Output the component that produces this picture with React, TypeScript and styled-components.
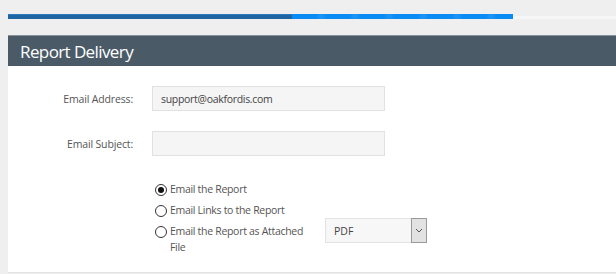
import React from "react";
import styled, { createGlobalStyle } from "styled-components";

const Global = createGlobalStyle`
  html, body { margin: 0; padding: 0; background: #efefef; }
  body { font-family: "Open Sans", "Liberation Sans", sans-serif; }
`;

const Page = styled.div`
  width: 616px;
  height: 274px;
  overflow: hidden;
  padding-left: 8px;
  box-sizing: border-box;
`;

const ProgressTrack = styled.div`
  margin-top: 14px;
  height: 5px;
  width: 608px;
  display: flex;
  align-items: stretch;
`;

const ProgressDone = styled.div`
  width: 284px;
  background: #1f64a3;
  border-top: 1px solid #2a78bd;
`;

const ProgressActive = styled.div`
  width: 221px;
  background: repeating-linear-gradient(90deg, #0a8cf4 0 24px, #1b93f4 27px, #1b93f4 31px, #0a8cf4 34px);
`;

const ProgressRest = styled.div`
  flex: 1;
  margin-top: 2px;
  background: #f6f6f6;
`;

const Header = styled.div`
  margin-top: 16px;
  height: 30px;
  background: #4a5b67;
  border-top: 1px solid #8a9299;
  display: flex;
  align-items: center;
  padding-left: 12px;
  color: #fff;
  font-size: 17px;
  letter-spacing: -0.6px;
`;

const Body = styled.div`
  background: #fff;
  height: 207px;
  border-bottom: 1px solid #e2e2e2;
  padding-top: 20px;
  box-sizing: border-box;
`;

const FieldRow = styled.div`
  display: flex;
  align-items: center;
  margin-bottom: 20px;
`;

const Label = styled.div`
  width: 125px;
  text-align: right;
  font-size: 10.5px;
  letter-spacing: -0.15px;
  color: #555;
`;

const TextInput = styled.div`
  margin-left: 19px;
  height: 25px;
  width: 233px;
  background: #f5f5f5;
  border: 1px solid #e1e1e1;
  display: flex;
  align-items: center;
  padding-left: 8px;
  box-sizing: border-box;
  font-size: 10.5px;
  letter-spacing: -0.3px;
  color: #444;
`;

const Options = styled.div`
  margin-left: 147px;
  margin-top: 25px;
  display: flex;
  flex-direction: column;
  gap: 5px;
`;

const OptionRow = styled.div`
  display: flex;
  align-items: flex-start;
`;

const Radio = styled.div<{ checked?: boolean }>`
  width: 10px;
  height: 10px;
  border: 1px solid #333;
  border-radius: 50%;
  margin-top: 3px;
  margin-right: 3px;
  display: flex;
  align-items: center;
  justify-content: center;
  flex-shrink: 0;
  &::after {
    content: "";
    display: ${(p) => (p.checked ? "block" : "none")};
    width: 6px;
    height: 6px;
    border-radius: 50%;
    background: #111;
  }
`;

const OptionText = styled.div`
  font-size: 10.5px;
  letter-spacing: -0.3px;
  color: #555;
  line-height: 16px;
  width: 150px;
`;

const Select = styled.div`
  margin-left: 5px;
  margin-top: -5px;
  width: 102px;
  height: 25px;
  background: #f7f7f7;
  border: 1px solid #e3e3e3;
  display: flex;
  box-sizing: border-box;
`;

const SelectValue = styled.div`
  flex: 1;
  font-size: 10.5px;
  color: #444;
  padding-left: 8px;
  display: flex;
  align-items: center;
`;

const SelectButton = styled.div`
  width: 14px;
  background: #e2e2e2;
  border: 1px solid #9a9a9a;
  margin: -1px -1px -1px 0;
  display: flex;
  align-items: center;
  justify-content: center;
`;

export default function App() {
  return (
    <>
      <Global />
      <Page>
        <ProgressTrack>
          <ProgressDone />
          <ProgressActive />
          <ProgressRest />
        </ProgressTrack>
        <Header>Report Delivery</Header>
        <Body>
          <FieldRow>
            <Label>Email Address:</Label>
            <TextInput>support@oakfordis.com</TextInput>
          </FieldRow>
          <FieldRow>
            <Label>Email Subject:</Label>
            <TextInput />
          </FieldRow>
          <Options>
            <OptionRow>
              <Radio checked />
              <OptionText>Email the Report</OptionText>
            </OptionRow>
            <OptionRow>
              <Radio />
              <OptionText>Email Links to the Report</OptionText>
            </OptionRow>
            <OptionRow>
              <Radio />
              <OptionText>Email the Report as Attached File</OptionText>
              <Select>
                <SelectValue>PDF</SelectValue>
                <SelectButton>
                  <svg width="8" height="5" viewBox="0 0 8 5">
                    <path d="M1 1l3 3 3-3" fill="none" stroke="#555" strokeWidth="1" />
                  </svg>
                </SelectButton>
              </Select>
            </OptionRow>
          </Options>
        </Body>
      </Page>
    </>
  );
}
